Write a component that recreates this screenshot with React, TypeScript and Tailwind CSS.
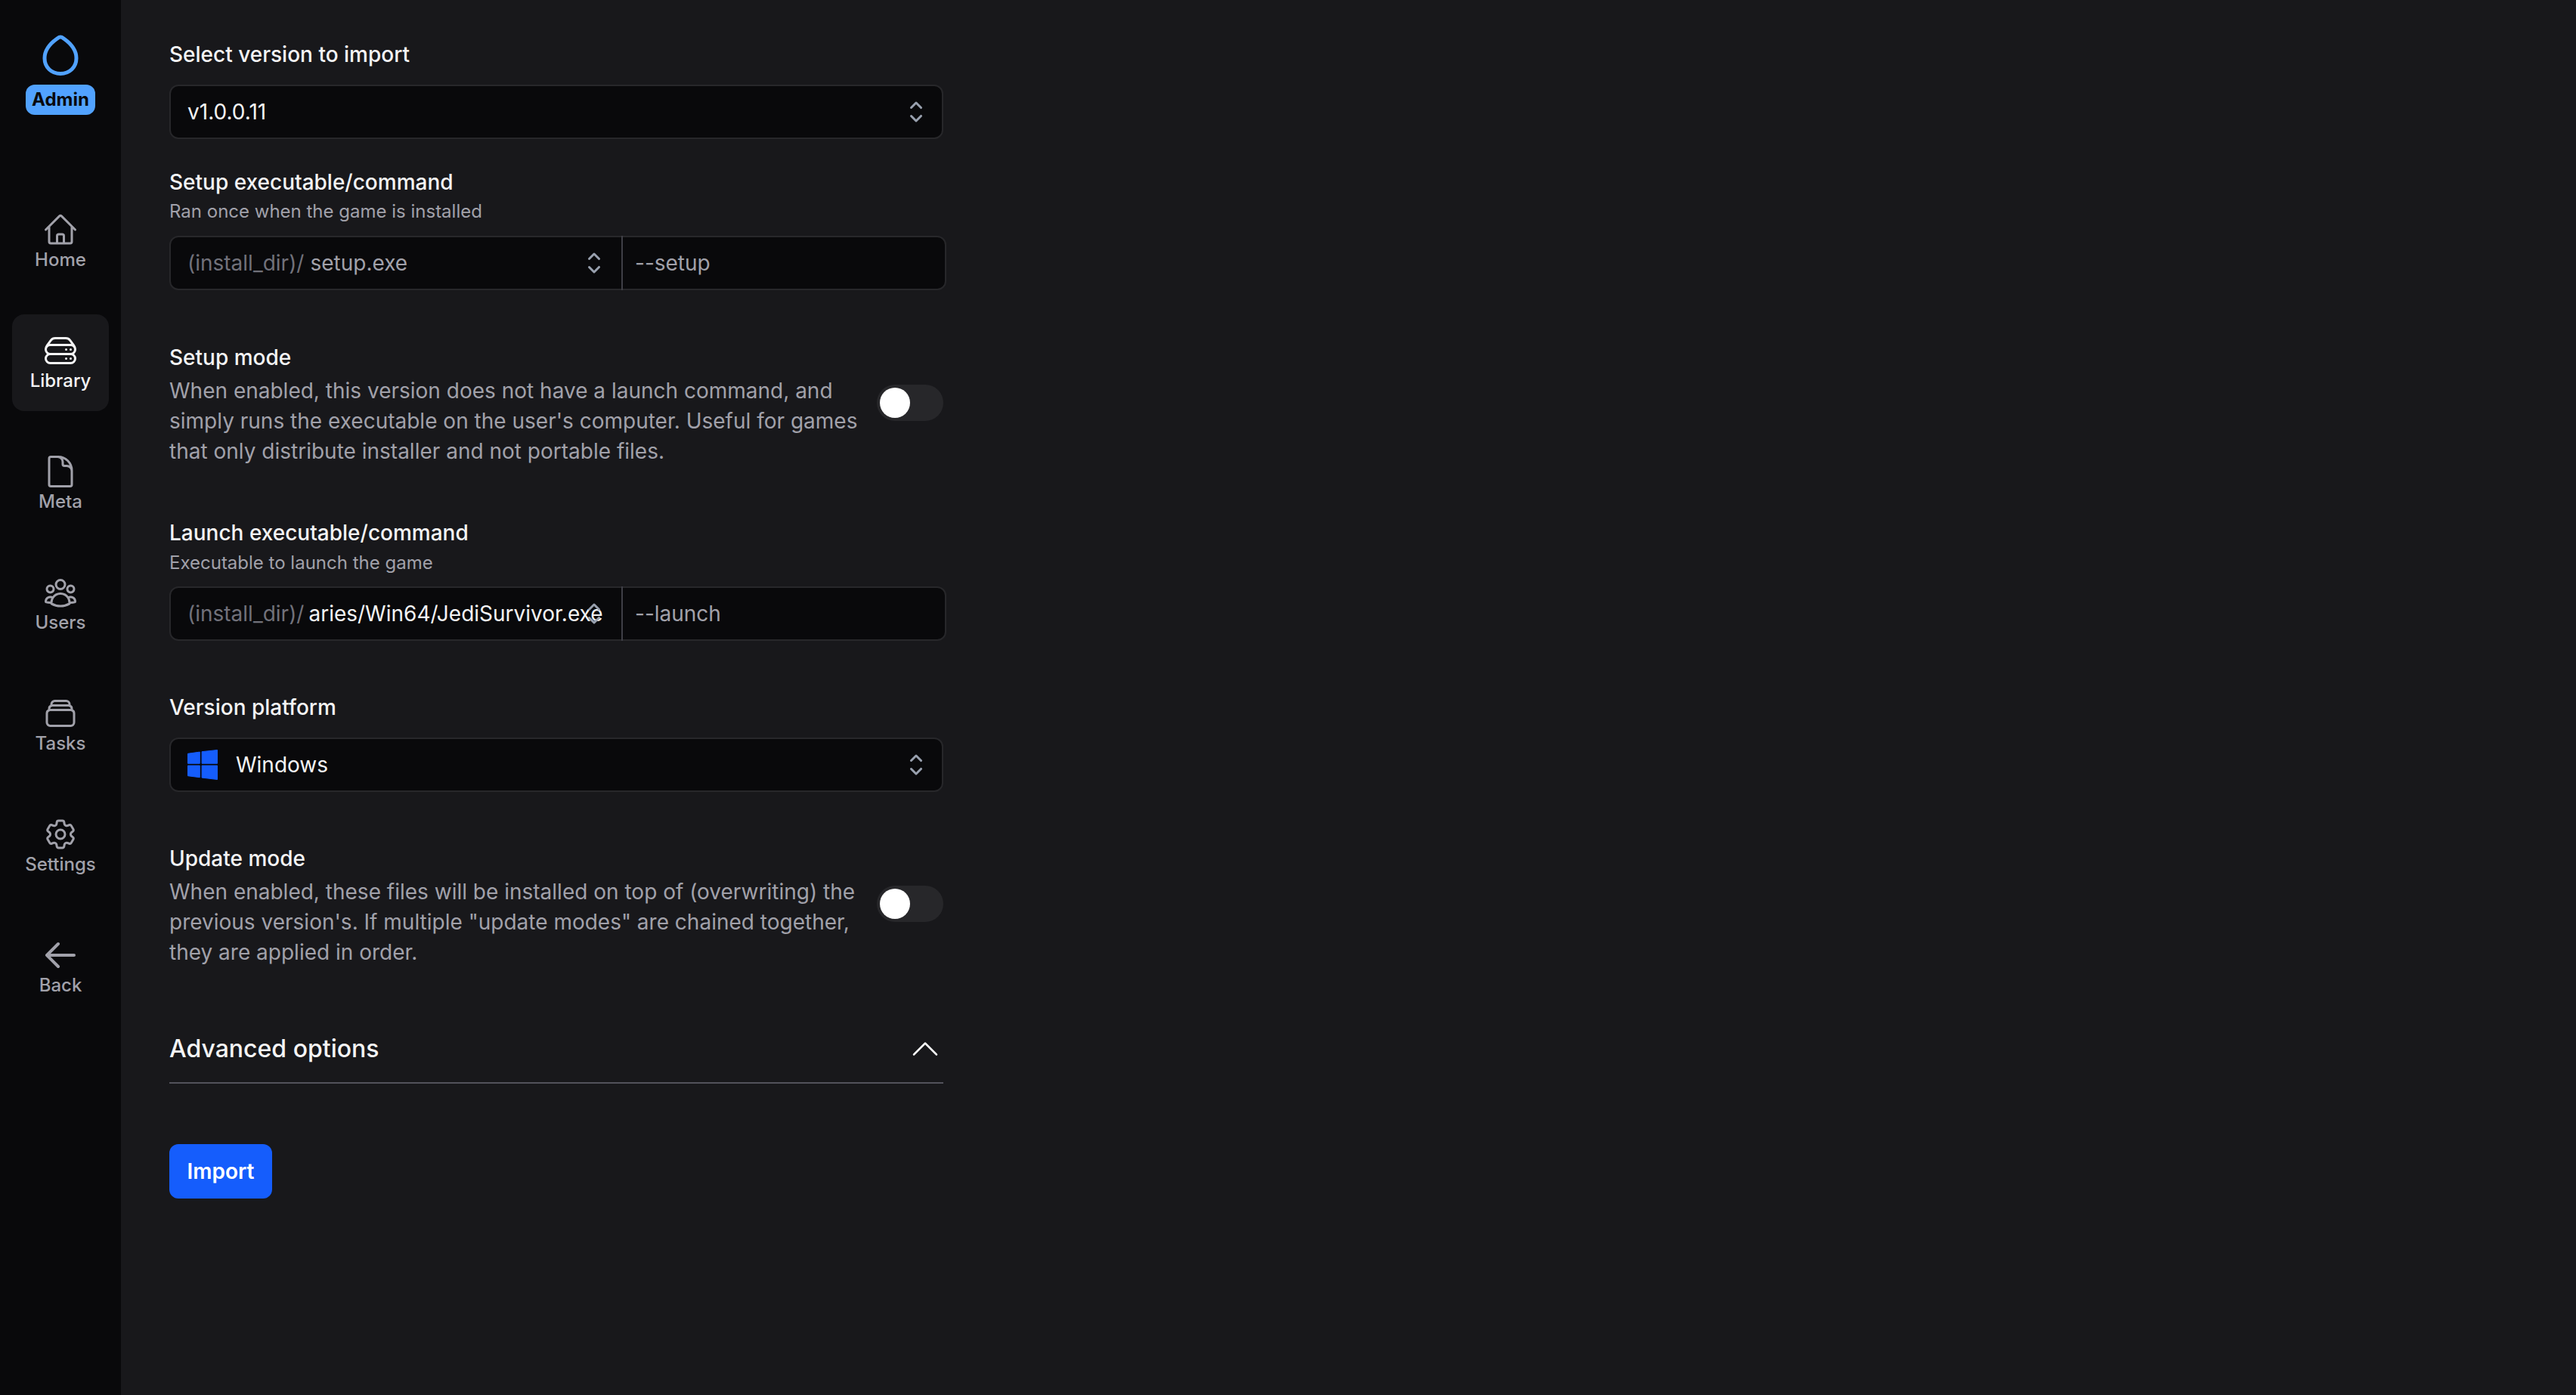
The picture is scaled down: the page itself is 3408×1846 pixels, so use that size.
import React from "react";
import {
  HiOutlineHome,
  HiOutlineServerStack,
  HiOutlineDocument,
  HiOutlineUserGroup,
  HiOutlineRectangleStack,
  HiOutlineCog6Tooth,
  HiOutlineArrowLeft,
  HiOutlineChevronUp,
} from "react-icons/hi2";

const nav = [
  { label: "Home", Icon: HiOutlineHome },
  { label: "Library", Icon: HiOutlineServerStack, active: true },
  { label: "Meta", Icon: HiOutlineDocument },
  { label: "Users", Icon: HiOutlineUserGroup },
  { label: "Tasks", Icon: HiOutlineRectangleStack },
  { label: "Settings", Icon: HiOutlineCog6Tooth },
  { label: "Back", Icon: HiOutlineArrowLeft },
];

function UpDown({ className }: { className: string }) {
  return (
    <svg viewBox="0 0 20 20" fill="currentColor" className={className}>
      <path
        fillRule="evenodd"
        d="M10.53 3.47a.75.75 0 0 0-1.06 0L6.22 6.72a.75.75 0 0 0 1.06 1.06L10 5.06l2.72 2.72a.75.75 0 1 0 1.06-1.06l-3.25-3.25Zm-4.31 9.81 3.25 3.25a.75.75 0 0 0 1.06 0l3.25-3.25a.75.75 0 1 0-1.06-1.06L10 14.94l-2.72-2.72a.75.75 0 0 0-1.06 1.06Z"
        clipRule="evenodd"
      />
    </svg>
  );
}

function Select({ children }: { children: React.ReactNode }) {
  return (
    <div className="mt-[16px] flex h-[72px] w-[1024px] items-center justify-between rounded-xl border-2 border-[#27272a] bg-[#09090b] pl-[22px] pr-[14px] text-[28px] text-[#f4f4f5]">
      <div className="flex items-center">{children}</div>
      <UpDown className="h-10 w-10 text-[#99a1af]" />
    </div>
  );
}

function CommandRow({ value, arg, dim, className }: { value: string; arg: string; dim?: boolean; className: string }) {
  return (
    <div className={`flex h-[72px] w-[1028px] items-stretch rounded-xl border-2 border-[#27272a] bg-[#09090b] text-[28px] ${className}`}>
      <div className="relative flex w-[596px] items-center overflow-hidden pl-[22px]">
        <span className="shrink-0 text-[#71717a]">(install_dir)/</span>
        <span className={`whitespace-nowrap ${dim ? "ml-[8px] text-[#a1a1aa]" : "ml-[6px] text-[#f4f4f5]"}`}>{value}</span>
        <UpDown className="absolute right-[16px] top-[14px] h-10 w-10 text-[#99a1af]" />
      </div>
      <div className="-my-[2px] flex flex-1 items-center border-l-2 border-[#3f3f46] pl-[16px] text-[#a1a1aa]">{arg}</div>
    </div>
  );
}

function Toggle() {
  return (
    <div className="flex h-[48px] w-[88px] shrink-0 items-center rounded-full bg-[#27272a] pl-1">
      <div className="h-10 w-10 rounded-full bg-white" />
    </div>
  );
}

function ToggleRow({ title, lines, className }: { title: string; lines: string[]; className: string }) {
  return (
    <div className={`flex w-[1024px] items-center justify-between ${className}`}>
      <div>
        <div className="text-[28px] leading-[48px] font-medium text-[#f4f4f5]">{title}</div>
        <div className="text-[28px] leading-[40px] text-[#a1a1aa]">
          {lines.map((l) => (
            <div key={l} className="whitespace-nowrap">{l}</div>
          ))}
        </div>
      </div>
      <Toggle />
    </div>
  );
}

export default function App() {
  return (
    <div className="flex h-[1846px] w-[3408px] overflow-hidden bg-[#18181b] font-['Inter',sans-serif]">
      <aside className="flex w-[160px] shrink-0 flex-col items-center bg-[#09090b]">
        <div className="flex h-[256px] flex-col items-center pt-[46px]">
          <svg viewBox="0 0 48 54" className="h-[54px] w-[48px] text-[#51a2ff]" fill="none" stroke="currentColor" strokeWidth="5">
            <path
              d="M24 3 C22 3 21 4 19 5.5 C12 10.5 3 18 3 31 C3 43 12 51.5 24 51.5 C36 51.5 45 43 45 31 C45 18 36 10.5 29 5.5 C27 4 26 3 24 3 Z"
              strokeLinejoin="round"
            />
          </svg>
          <div className="mt-[12px] flex h-[40px] w-[92px] items-center justify-center rounded-[12px] bg-[#51a2ff] text-[24px] font-bold text-[#09090b]">
            Admin
          </div>
        </div>
        <nav className="flex flex-col gap-[32px]">
          {nav.map(({ label, Icon, active }) => (
            <div
              key={label}
              className={`flex h-[128px] w-[128px] flex-col items-center justify-center rounded-2xl ${
                active ? "bg-[#18181b] text-[#f4f4f5]" : "text-[#a1a1aa]"
              }`}
            >
              <Icon className="h-12 w-12" strokeWidth={label === "Back" ? 2 : 1.5} />
              <span className="text-[24px] leading-[32px] font-medium">{label}</span>
            </div>
          ))}
        </nav>
      </aside>

      <main className="flex-1 pl-[64px] pt-[48px]">
        <div className="text-[28px] leading-[48px] font-medium text-[#f4f4f5]">Select version to import</div>
        <Select>v1.0.0.11</Select>

        <div className="mt-[34px] text-[28px] leading-[46px] font-medium text-[#f4f4f5]">Setup executable/command</div>
        <div className="text-[24px] leading-[32px] text-[#a1a1aa]">Ran once when the game is installed</div>
        <CommandRow className="mt-[16px]" value="setup.exe" arg="--setup" dim />

        <ToggleRow
          className="mt-[65px]"
          title="Setup mode"
          lines={[
            "When enabled, this version does not have a launch command, and",
            "simply runs the executable on the user's computer. Useful for games",
            "that only distribute installer and not portable files.",
          ]}
        />

        <div className="mt-[64px] text-[28px] leading-[48px] font-medium text-[#f4f4f5]">Launch executable/command</div>
        <div className="text-[24px] leading-[32px] text-[#a1a1aa]">Executable to launch the game</div>
        <CommandRow className="mt-[15px]" value="aries/Win64/JediSurvivor.exe" arg="--launch" />

        <div className="mt-[64px] text-[28px] leading-[48px] font-medium text-[#f4f4f5]">Version platform</div>
        <Select>
          <svg viewBox="0 0 40 40" fill="currentColor" stroke="currentColor" strokeWidth="1" strokeLinejoin="round" className="mr-[24px] h-10 w-10 text-[#155dfc]">
            <path d="M.5 5.3 16.3 3.1v15.2H.5ZM19.1 2.7 39.5.5v17.8H19.1ZM.5 21.1h15.8v15.6L.5 34.7ZM19.1 21.1h20.4v18.4l-20.4-2.4Z" />
          </svg>
          Windows
        </Select>

        <ToggleRow
          className="mt-[64px]"
          title="Update mode"
          lines={[
            "When enabled, these files will be installed on top of (overwriting) the",
            "previous version's. If multiple \"update modes\" are chained together,",
            "they are applied in order.",
          ]}
        />

        <div className="mt-[84px] flex h-[70px] w-[1024px] items-start justify-between border-b-2 border-[#52525b] text-[32px] font-medium leading-[48px] text-[#f4f4f5]">
          <span>Advanced options</span>
          <HiOutlineChevronUp className="h-12 w-12" strokeWidth={1.25} />
        </div>

        <button className="mt-[80px] flex h-[72px] w-[136px] items-center justify-center rounded-xl bg-[#155dfc] text-[28px] font-semibold text-white">
          Import
        </button>
      </main>
    </div>
  );
}
